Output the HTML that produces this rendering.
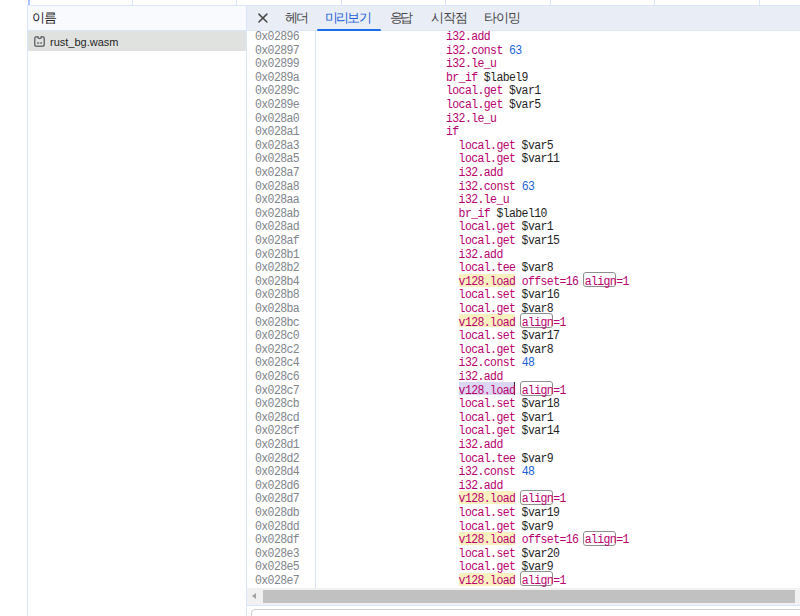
<!DOCTYPE html>
<html><head><meta charset="utf-8"><style>
*{margin:0;padding:0;box-sizing:border-box}
html,body{width:800px;height:616px;overflow:hidden;background:#fff;position:relative;font-family:"Liberation Sans",sans-serif}
.abs{position:absolute}
.vline{position:absolute;width:1px;background:#d9e5fb}
.hline{position:absolute;height:1px;background:#d9e5fb}
#lhdr{position:absolute;left:28px;top:6px;width:218px;height:24px;background:#f8fafd}
#lhdr span{position:absolute;left:4px;top:4px;font-size:12.5px;letter-spacing:-1px;color:#1f1f1f}
#selrow{position:absolute;left:28px;top:31px;width:218px;height:20px;background:#e0e2e0}
#fname{position:absolute;left:50px;top:36px;font-size:11px;color:#1f1f1f}
#tabbar{position:absolute;left:247px;top:6px;width:553px;height:24px;background:#e9eef6}
.tab{position:absolute;top:10px;font-size:12.5px;letter-spacing:-1px;color:#474747}
.tab.sel{color:#1b5fd6}
#uline{position:absolute;left:317px;top:29px;width:64px;height:2px;background:#1a6fec;border-radius:1px}
.code{font-family:"Liberation Mono",monospace;font-size:10.5px}
.ln{position:absolute;left:255px;font-family:"Liberation Mono",monospace;font-size:11.5px;letter-spacing:-0.6px;color:#80868b;line-height:13.6px;white-space:pre;transform:scaleY(1.1);transform-origin:0 6.5px}
.cl{position:absolute;font-family:"Liberation Mono",monospace;font-size:11.5px;letter-spacing:-0.6px;color:#1f1f1f;line-height:13.6px;white-space:pre;transform:scaleY(1.1);transform-origin:0 6.5px}
.i0{left:446px}
.i1{left:458.6px}
.k{color:#b8006e}
.a{color:#b8006e}
.n{color:#1a5fd8}
.y,.p,.b{color:#b8006e}
.hy{position:absolute;height:13.1px;background:#fdf0c0}
.hp{position:absolute;height:13.1px;background:#dcd6f2}
.cur{position:absolute;width:1px;height:13px;background:#303030}
.bx{position:absolute;height:15px;border:1px solid #8e8e8e;border-radius:3px}
#sb{position:absolute;left:247px;top:588px;width:553px;height:17px;background:#f1f1f1}
#thumb{position:absolute;left:263px;top:590px;width:532px;height:13px;background:#c1c1c1}
#arr{position:absolute;left:252px;top:593px;width:0;height:0;border-top:3.5px solid transparent;border-bottom:3.5px solid transparent;border-right:4px solid #a3a3a3}
#inp{position:absolute;left:251px;top:609px;width:560px;height:20px;border:1px solid #cfcfcf;border-radius:4px}

</style></head><body>
<div class="vline" style="left:27px;top:5px;height:611px"></div>
<div class="abs" style="left:28px;top:0;width:2px;height:5px;background:#a8c7fa"></div>
<div class="vline" style="left:132px;top:0;height:5px"></div>
<div class="vline" style="left:236px;top:0;height:5px"></div>
<div class="vline" style="left:341px;top:0;height:5px"></div>
<div class="vline" style="left:445px;top:0;height:5px"></div>
<div class="vline" style="left:550px;top:0;height:5px"></div>
<div class="vline" style="left:654px;top:0;height:5px"></div>
<div class="vline" style="left:759px;top:0;height:5px"></div>
<div class="hline" style="left:28px;top:5px;width:772px"></div>
<div id="lhdr"><span>이름</span></div>
<div class="hline" style="left:28px;top:30px;width:218px"></div>
<div id="selrow"></div>
<svg class="abs" style="left:34px;top:36px" width="12" height="11" viewBox="0 0 12 11"><path d="M2.5,0.75 H3.8 A1.75,1.75 0 0 0 7.3,0.75 H8.5 A1.75,1.75 0 0 1 10.25,2.5 V8.5 A1.75,1.75 0 0 1 8.5,10.25 H2.5 A1.75,1.75 0 0 1 0.75,8.5 V2.5 A1.75,1.75 0 0 1 2.5,0.75 Z" fill="none" stroke="#6b6e72" stroke-width="1.5"/><rect x="3" y="6" width="2.2" height="2" fill="#8a8d90"/><rect x="6.2" y="6" width="1.8" height="2" fill="#8a8d90"/></svg>
<div id="fname">rust_bg.wasm</div>
<div class="vline" style="left:246px;top:6px;height:610px"></div>
<div id="tabbar"></div>
<div class="abs" style="left:247px;top:29px;width:553px;height:1px;background:#edeff3"></div>
<div class="hline" style="left:247px;top:30px;width:553px"></div>
<svg class="abs" style="left:257px;top:12px" width="12" height="12" viewBox="0 0 12 12"><path d="M1.9 2.1 L9.9 10 M9.9 2.1 L1.9 10" stroke="#474747" stroke-width="1.5" stroke-linecap="round" fill="none"/></svg>
<div class="tab" style="left:284.5px;letter-spacing:-2px">헤더</div>
<div class="tab sel" style="left:325px;letter-spacing:-1.8px">미리보기</div>
<div class="tab" style="left:389.5px;letter-spacing:-2.2px">응답</div>
<div class="tab" style="left:431px">시작점</div>
<div class="tab" style="left:483.5px">타이밍</div>
<div id="uline"></div>
<div class="vline" style="left:315px;top:31px;height:557px"></div>
<div class="ln" style="top:30.0px">0x02896</div>
<div class="ln" style="top:43.6px">0x02897</div>
<div class="ln" style="top:57.2px">0x02899</div>
<div class="ln" style="top:70.8px">0x0289a</div>
<div class="ln" style="top:84.4px">0x0289c</div>
<div class="ln" style="top:98.0px">0x0289e</div>
<div class="ln" style="top:111.6px">0x028a0</div>
<div class="ln" style="top:125.2px">0x028a1</div>
<div class="ln" style="top:138.8px">0x028a3</div>
<div class="ln" style="top:152.4px">0x028a5</div>
<div class="ln" style="top:166.0px">0x028a7</div>
<div class="ln" style="top:179.6px">0x028a8</div>
<div class="ln" style="top:193.2px">0x028aa</div>
<div class="ln" style="top:206.8px">0x028ab</div>
<div class="ln" style="top:220.4px">0x028ad</div>
<div class="ln" style="top:234.0px">0x028af</div>
<div class="ln" style="top:247.6px">0x028b1</div>
<div class="ln" style="top:261.2px">0x028b2</div>
<div class="ln" style="top:274.8px">0x028b4</div>
<div class="ln" style="top:288.4px">0x028b8</div>
<div class="ln" style="top:302.0px">0x028ba</div>
<div class="ln" style="top:315.6px">0x028bc</div>
<div class="ln" style="top:329.2px">0x028c0</div>
<div class="ln" style="top:342.8px">0x028c2</div>
<div class="ln" style="top:356.4px">0x028c4</div>
<div class="ln" style="top:370.0px">0x028c6</div>
<div class="ln" style="top:383.6px">0x028c7</div>
<div class="ln" style="top:397.2px">0x028cb</div>
<div class="ln" style="top:410.8px">0x028cd</div>
<div class="ln" style="top:424.4px">0x028cf</div>
<div class="ln" style="top:438.0px">0x028d1</div>
<div class="ln" style="top:451.6px">0x028d2</div>
<div class="ln" style="top:465.2px">0x028d4</div>
<div class="ln" style="top:478.8px">0x028d6</div>
<div class="ln" style="top:492.4px">0x028d7</div>
<div class="ln" style="top:506.0px">0x028db</div>
<div class="ln" style="top:519.6px">0x028dd</div>
<div class="ln" style="top:533.2px">0x028df</div>
<div class="ln" style="top:546.8px">0x028e3</div>
<div class="ln" style="top:560.4px">0x028e5</div>
<div class="ln" style="top:574.0px">0x028e7</div>
<div class="hy" style="left:458.5px;top:273.6px;width:56.2px"></div>
<div class="bx" style="left:583.0px;top:272.2px;width:33.0px"></div>
<div class="hy" style="left:458.5px;top:314.4px;width:56.2px"></div>
<div class="bx" style="left:520.0px;top:313.0px;width:33.0px"></div>
<div class="hp" style="left:458.5px;top:382.4px;width:56.2px"></div>
<div class="cur" style="left:514.2px;top:382.0px"></div>
<div class="bx" style="left:520.0px;top:381.0px;width:33.0px"></div>
<div class="hy" style="left:458.5px;top:491.2px;width:56.2px"></div>
<div class="bx" style="left:520.0px;top:489.8px;width:33.0px"></div>
<div class="hy" style="left:458.5px;top:532.0px;width:56.2px"></div>
<div class="bx" style="left:583.0px;top:530.6px;width:33.0px"></div>
<div class="hy" style="left:458.5px;top:572.8px;width:56.2px"></div>
<div class="bx" style="left:520.0px;top:571.4px;width:33.0px"></div>
<div class="cl i0" style="top:30.0px"><span class="k">i32.add</span></div>
<div class="cl i0" style="top:43.6px"><span class="k">i32.const</span>&nbsp;<span class="n">63</span></div>
<div class="cl i0" style="top:57.2px"><span class="k">i32.le_u</span></div>
<div class="cl i0" style="top:70.8px"><span class="k">br_if</span>&nbsp;$label9</div>
<div class="cl i0" style="top:84.4px"><span class="k">local.get</span>&nbsp;$var1</div>
<div class="cl i0" style="top:98.0px"><span class="k">local.get</span>&nbsp;$var5</div>
<div class="cl i0" style="top:111.6px"><span class="k">i32.le_u</span></div>
<div class="cl i0" style="top:125.2px"><span class="k">if</span></div>
<div class="cl i1" style="top:138.8px"><span class="k">local.get</span>&nbsp;$var5</div>
<div class="cl i1" style="top:152.4px"><span class="k">local.get</span>&nbsp;$var11</div>
<div class="cl i1" style="top:166.0px"><span class="k">i32.add</span></div>
<div class="cl i1" style="top:179.6px"><span class="k">i32.const</span>&nbsp;<span class="n">63</span></div>
<div class="cl i1" style="top:193.2px"><span class="k">i32.le_u</span></div>
<div class="cl i1" style="top:206.8px"><span class="k">br_if</span>&nbsp;$label10</div>
<div class="cl i1" style="top:220.4px"><span class="k">local.get</span>&nbsp;$var1</div>
<div class="cl i1" style="top:234.0px"><span class="k">local.get</span>&nbsp;$var15</div>
<div class="cl i1" style="top:247.6px"><span class="k">i32.add</span></div>
<div class="cl i1" style="top:261.2px"><span class="k">local.tee</span>&nbsp;$var8</div>
<div class="cl i1" style="top:274.8px"><span class="y">v128.load</span>&nbsp;<span class="a">offset=16</span>&nbsp;<span class="b">align</span><span class="a">=1</span></div>
<div class="cl i1" style="top:288.4px"><span class="k">local.set</span>&nbsp;$var16</div>
<div class="cl i1" style="top:302.0px"><span class="k">local.get</span>&nbsp;$var8</div>
<div class="cl i1" style="top:315.6px"><span class="y">v128.load</span>&nbsp;<span class="b">align</span><span class="a">=1</span></div>
<div class="cl i1" style="top:329.2px"><span class="k">local.set</span>&nbsp;$var17</div>
<div class="cl i1" style="top:342.8px"><span class="k">local.get</span>&nbsp;$var8</div>
<div class="cl i1" style="top:356.4px"><span class="k">i32.const</span>&nbsp;<span class="n">48</span></div>
<div class="cl i1" style="top:370.0px"><span class="k">i32.add</span></div>
<div class="cl i1" style="top:383.6px"><span class="p">v128.load</span>&nbsp;<span class="b">align</span><span class="a">=1</span></div>
<div class="cl i1" style="top:397.2px"><span class="k">local.set</span>&nbsp;$var18</div>
<div class="cl i1" style="top:410.8px"><span class="k">local.get</span>&nbsp;$var1</div>
<div class="cl i1" style="top:424.4px"><span class="k">local.get</span>&nbsp;$var14</div>
<div class="cl i1" style="top:438.0px"><span class="k">i32.add</span></div>
<div class="cl i1" style="top:451.6px"><span class="k">local.tee</span>&nbsp;$var9</div>
<div class="cl i1" style="top:465.2px"><span class="k">i32.const</span>&nbsp;<span class="n">48</span></div>
<div class="cl i1" style="top:478.8px"><span class="k">i32.add</span></div>
<div class="cl i1" style="top:492.4px"><span class="y">v128.load</span>&nbsp;<span class="b">align</span><span class="a">=1</span></div>
<div class="cl i1" style="top:506.0px"><span class="k">local.set</span>&nbsp;$var19</div>
<div class="cl i1" style="top:519.6px"><span class="k">local.get</span>&nbsp;$var9</div>
<div class="cl i1" style="top:533.2px"><span class="y">v128.load</span>&nbsp;<span class="a">offset=16</span>&nbsp;<span class="b">align</span><span class="a">=1</span></div>
<div class="cl i1" style="top:546.8px"><span class="k">local.set</span>&nbsp;$var20</div>
<div class="cl i1" style="top:560.4px"><span class="k">local.get</span>&nbsp;$var9</div>
<div class="cl i1" style="top:574.0px"><span class="y">v128.load</span>&nbsp;<span class="b">align</span><span class="a">=1</span></div>
<div id="sb"></div>
<div id="arr"></div>
<div id="thumb"></div>
<div class="hline" style="left:247px;top:605px;width:553px"></div>
<div id="inp"></div>

</body></html>
